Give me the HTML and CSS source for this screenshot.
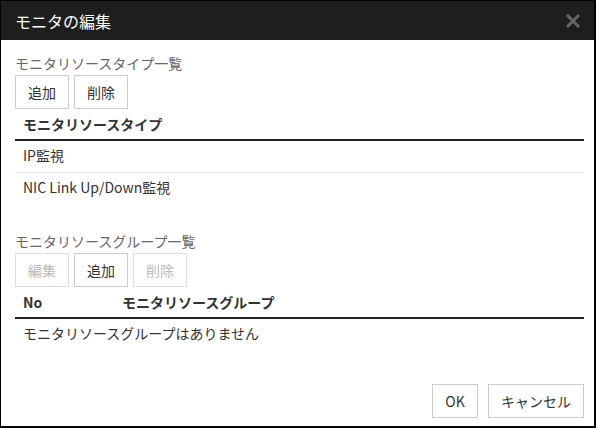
FILE: index.html
```html
<!DOCTYPE html>
<html lang="ja">
  <head>
    <meta charset="UTF-8" />
    <meta name="viewport" content="width=device-width, initial-scale=1.0" />
    <title>モニタの編集</title>
    <link rel="stylesheet" href="styles.css">
  </head>
  <body>
    <div id="dialog">
      <div class="dialogHeader">
        <span class="dialogTitle">モニタの編集</span>
        <svg class="closeIcon" width="14" height="14" viewBox="0 0 14 14">
          <path d="M2 2 L12 12 M12 2 L2 12" stroke="#666" stroke-width="3" stroke-linecap="square" />
        </svg>
      </div>
      <div class="dialogBody">
        <div class="sectionLabel">モニタリソースタイプ一覧</div>
        <div class="btnRow">
          <button class="btn">追加</button>
          <button class="btn">削除</button>
        </div>
        <table class="list">
          <thead>
            <tr><th>モニタリソースタイプ</th></tr>
          </thead>
          <tbody>
            <tr><td>IP監視</td></tr>
            <tr><td>NIC Link Up/Down監視</td></tr>
          </tbody>
        </table>

        <div class="sectionLabel second">モニタリソースグループ一覧</div>
        <div class="btnRow">
          <button class="btn" disabled>編集</button>
          <button class="btn">追加</button>
          <button class="btn" disabled>削除</button>
        </div>
        <table class="list">
          <thead>
            <tr><th class="noCol">No</th><th>モニタリソースグループ</th></tr>
          </thead>
          <tbody>
            <tr><td colspan="2">モニタリソースグループはありません</td></tr>
          </tbody>
        </table>
      </div>
      <div class="dialogFooter">
        <button class="btn okBtn">OK</button>
        <button class="btn">キャンセル</button>
      </div>
    </div>
  </body>
</html>
```

FILE: styles.css
```css
html,
body {
  margin: 0;
  height: 100%;
}
body {
  font-family: "Noto Sans CJK JP", "Noto Sans", sans-serif;
  font-size: 14px;
  color: #333;
  background-color: #fff;
}
#dialog {
  box-sizing: border-box;
  height: 428px;
  width: 596px;
  border: 1px solid #000;
  border-right-width: 2px;
  border-bottom-width: 2px;
  display: flex;
  flex-direction: column;
}
.dialogHeader {
  height: 39px;
  background-color: #1e1e1e;
  display: flex;
  align-items: center;
  justify-content: space-between;
  padding: 0 14px;
}
.dialogTitle {
  color: #fff;
  font-size: 16px;
}
.dialogBody {
  padding: 13px 10px 0 14px;
}
.sectionLabel {
  color: #666;
  line-height: 20px;
  margin-bottom: 2px;
}
.sectionLabel.second {
  margin-top: 27px;
}
.btnRow {
  display: flex;
  gap: 5px;
}
.btn {
  font-family: inherit;
  font-size: 14px;
  color: #333;
  background-color: #fff;
  border: 1px solid #ccc;
  height: 34px;
  padding: 0 12px 1px;
  cursor: pointer;
}
.btn:disabled {
  color: #bbb;
  border-color: #ddd;
  cursor: default;
}
.okBtn {
  min-width: 46px;
}
.list {
  width: 100%;
  border-collapse: collapse;
}
.list th {
  text-align: left;
  font-weight: bold;
  height: 29px;
  padding: 0 8px 1px;
  border-bottom: 2px solid #222;
}
.list th.noCol {
  width: 83px;
}
.list td {
  height: 28px;
  padding: 0 8px 3px;
  border-bottom: 1px solid #e8e8e8;
}
.list tr:last-child td {
  border-bottom: none;
}
.dialogFooter {
  margin-top: auto;
  display: flex;
  justify-content: flex-end;
  gap: 10px;
  padding: 0 10px 8px 0;
}
```
